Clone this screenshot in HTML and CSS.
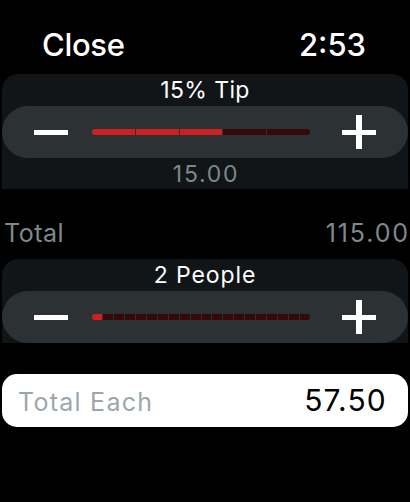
FILE: index.html
```html
<!DOCTYPE html>
<html lang="en">
<head>
    <meta charset="UTF-8">
    <meta name="viewport" content="width=device-width, initial-scale=1.0">
    <title>Tip Calculator</title>
    <link rel="stylesheet" href="styles.css">
</head>
<body>

    <header class="top-bar">
        <span class="close">Close</span>
        <span class="clock">2:53</span>
    </header>

    <section class="group">
        <div class="group-title">15% Tip</div>
        <div class="stepper">
            <span class="minus"></span>
            <div class="level">
                <span class="seg on"></span>
                <span class="seg on"></span>
                <span class="seg on"></span>
                <span class="seg"></span>
                <span class="seg"></span>
            </div>
            <span class="plus"></span>
        </div>
        <div class="group-value">15.00</div>
    </section>

    <div class="total-row">
        <span>Total</span>
        <span class="total-amount">115.00</span>
    </div>

    <section class="group">
        <div class="group-title people">2 People</div>
        <div class="stepper">
            <span class="minus"></span>
            <div class="level" id="peopleLevel"></div>
            <span class="plus"></span>
        </div>
    </section>

    <div class="each-card">
        <span class="each-label">Total Each</span>
        <span class="each-value">57.50</span>
    </div>

    <script>
        // 20 segments, first one lit for 2 people
        var level = document.getElementById('peopleLevel');
        for (var i = 0; i < 20; i++) {
            var seg = document.createElement('span');
            seg.className = i === 0 ? 'seg on' : 'seg';
            level.appendChild(seg);
        }
    </script>

</body>
</html>
```

FILE: styles.css
```css
body {
    margin: 0;
    padding: 0;
    background: #000000;
    color: #ffffff;
    font-family: Inter, "Noto Sans", sans-serif;
    width: 410px;
}

.top-bar {
    display: flex;
    justify-content: space-between;
    padding: 27px 44px 11px 42px;
    font-size: 31px;
    font-weight: 500;
    line-height: 36px;
}

.close {
    letter-spacing: -0.3px;
}

.group {
    margin: 0 2px;
    background: #111517;
    border-radius: 16px 16px 0 0;
}

.group-title {
    padding-top: 1px;
    line-height: 31px;
    font-size: 23px;
    text-align: center;
    letter-spacing: 0.4px;
}

.group-title.people {
    letter-spacing: 0.9px;
}

.stepper {
    display: flex;
    align-items: center;
    height: 52px;
    padding: 0 32px;
    background: #2c3134;
    border-radius: 26px;
}

.minus {
    width: 34px;
    height: 5px;
    background: #ffffff;
}

.plus {
    position: relative;
    width: 34px;
    height: 5px;
    margin-left: 32px;
    background: #ffffff;
}

.plus::after {
    content: "";
    position: absolute;
    left: 14px;
    top: -15px;
    width: 6px;
    height: 34px;
    background: #ffffff;
}

.level {
    display: flex;
    gap: 1px;
    width: 218px;
    height: 6px;
    margin-left: 24px;
    border-radius: 3px;
    overflow: hidden;
}

.seg {
    flex: 1;
    background: #360809;
}

.seg.on {
    background: #d11f21;
}

.group-value {
    padding-top: 2px;
    padding-left: 2px;
    line-height: 29px;
    font-size: 23px;
    text-align: center;
    color: #7d878a;
    letter-spacing: 1.7px;
}

.total-row {
    display: flex;
    justify-content: space-between;
    margin-top: 29px;
    padding: 0 0 0 4px;
    font-size: 25px;
    line-height: 30px;
    color: #7e898c;
    letter-spacing: 0.5px;
}

.total-amount {
    letter-spacing: 1.9px;
}

.total-row + .group {
    margin-top: 11px;
}

.each-card {
    display: flex;
    justify-content: space-between;
    align-items: baseline;
    height: 53px;
    margin: 31px 2px 0;
    padding: 0 21px 0 16px;
    background: #ffffff;
    border-radius: 15px;
    line-height: 53px;
}

.each-label {
    font-size: 25px;
    color: #9ca7ad;
    letter-spacing: 1.25px;
}

.each-value {
    font-size: 30px;
    color: #000000;
    letter-spacing: 1.2px;
}
```
